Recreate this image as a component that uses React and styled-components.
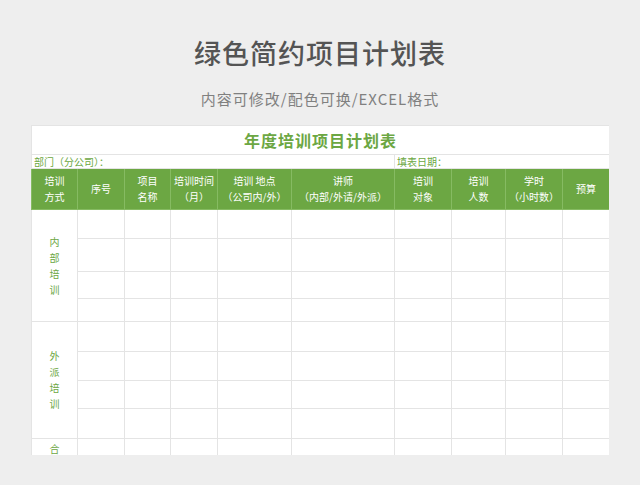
import React from 'react'
import styled, { createGlobalStyle } from 'styled-components'

const GREEN = '#6ca743'
const LINE = '#e4e4e4'

const Global = createGlobalStyle`
  html, body { margin: 0; background: #eeeeee; }
  body { font-family: "Noto Sans CJK SC", "Noto Sans", sans-serif; overflow: hidden; }
`

const Page = styled.div`
  width: 640px;
  height: 485px;
  display: flex;
  flex-direction: column;
  align-items: center;
`

const Title = styled.h1`
  margin: 36px 0 0;
  height: 34px;
  font-size: 27px;
  line-height: 34px;
  font-weight: 500;
  color: #545454;
  letter-spacing: 1px;
`

const Subtitle = styled.div`
  margin-top: 19px;
  font-size: 15px;
  line-height: 20px;
  color: #808080;
  letter-spacing: 1px;
`

const Sheet = styled.div`
  margin-top: 16px;
  width: 578px;
  height: 330px;
  background: #fff;
  overflow: hidden;
`

const Table = styled.table`
  width: 578px;
  border-collapse: collapse;
  table-layout: fixed;
  font-size: 10px;
  td, th { border: 1px solid ${LINE}; padding: 0; }
`

const SheetTitle = styled.td`
  height: 28px;
  text-align: center;
  color: ${GREEN};
  font-size: 16px;
  font-weight: 700;
  letter-spacing: 1px;
`

const Info = styled.td`
  height: 13px;
  color: ${GREEN};
  font-size: 10px;
  line-height: 12px;
  padding-left: 2px !important;
`

const Head = styled.th`
  height: 40px;
  background: ${GREEN};
  color: #fff;
  font-weight: 400;
  font-size: 10px;
  line-height: 16px;
  border-color: #86bb62 !important;
`

const Group = styled.td`
  color: ${GREEN};
  text-align: center;
  font-size: 10px;
  line-height: 16px;
  vertical-align: middle;
`

const Cell = styled.td`
  height: ${p => p.$h}px;
`

const cols = [46, 47, 46, 47, 74, 103, 57, 54, 57, 47]
const heads = [
  ['培训', '方式'], ['序号'], ['项目', '名称'], ['培训时间', '（月）'], ['培训 地点', '（公司内/外）'],
  ['讲师', '（内部/外请/外派）'], ['培训', '对象'], ['培训', '人数'], ['学时', '（小时数）'], ['预算'],
]
const groups = [
  { name: '内部培训', rows: [28, 32, 26, 22] },
  { name: '外派培训', rows: [29, 28, 27, 29] },
]

function Blank({ h }) {
  return Array.from({ length: 9 }, (_, i) => <Cell key={i} $h={h} />)
}

export default function App() {
  return (
    <Page>
      <Global />
      <Title>绿色简约项目计划表</Title>
      <Subtitle>内容可修改/配色可换/EXCEL格式</Subtitle>
      <Sheet>
        <Table>
          <colgroup>{cols.map((w, i) => <col key={i} style={{ width: w }} />)}</colgroup>
          <tbody>
            <tr><SheetTitle colSpan={10}>年度培训项目计划表</SheetTitle></tr>
            <tr>
              <Info colSpan={6}>部门（分公司）：</Info>
              <Info colSpan={4}>填表日期：</Info>
            </tr>
            <tr>
              {heads.map((h, i) => (
                <Head key={i}>{h.map((t, j) => <div key={j}>{t}</div>)}</Head>
              ))}
            </tr>
            {groups.map(g => g.rows.map((h, i) => (
              <tr key={g.name + i}>
                {i === 0 && (
                  <Group rowSpan={g.rows.length}>
                    {g.name.split('').map((c, k) => <div key={k}>{c}</div>)}
                  </Group>
                )}
                <Blank h={h} />
              </tr>
            )))}
            <tr>
              <Group style={{ verticalAlign: 'top', paddingTop: 2 }}><div>合</div><div>计</div></Group>
              <Blank h={30} />
            </tr>
          </tbody>
        </Table>
      </Sheet>
    </Page>
  )
}
